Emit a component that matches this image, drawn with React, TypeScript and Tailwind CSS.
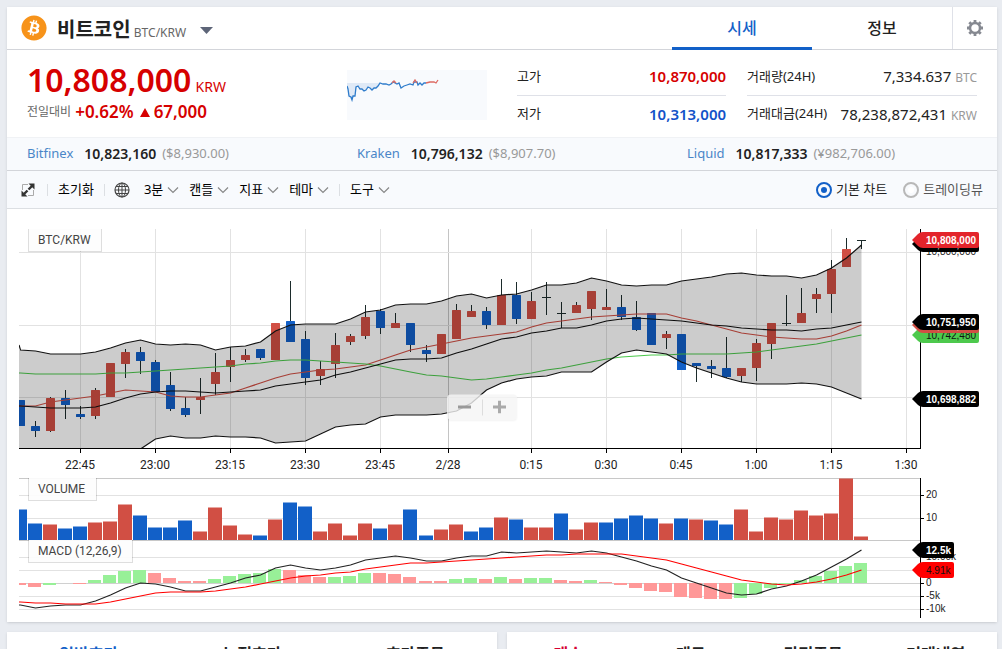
import { useState } from "react";
import { FaBitcoin } from "react-icons/fa6";

const EXCHANGES = [
  { name: "Bitfinex", price: "10,823,160", foreign: "($8,930.00)" },
  { name: "Kraken", price: "10,796,132", foreign: "($8,907.70)" },
  { name: "Liquid", price: "10,817,333", foreign: "(¥982,706.00)" },
];

const MENUS = ["3분", "캔들", "지표", "테마"];

// [high, body top, body bottom, low, up]
const CANDLES: [number, number, number, number, number][] = [
  [400, 400, 426, 426, 0], [421, 426, 431, 437, 0], [397, 398, 431, 432, 1], [390, 398, 405, 419, 0],
  [406, 414, 417, 419, 0], [388, 390, 416, 419, 1], [363, 363, 397, 397, 1], [349, 352, 364, 378, 1],
  [347, 352, 361, 374, 0], [360, 362, 392, 392, 0], [372, 385, 409, 411, 0], [397, 408, 415, 417, 0],
  [378, 397, 400, 414, 1], [353, 372, 384, 395, 1], [347, 360, 367, 382, 1], [349, 355, 360, 362, 1],
  [349, 349, 358, 360, 0], [323, 323, 360, 360, 1], [281, 321, 342, 342, 0], [331, 339, 378, 385, 0],
  [361, 369, 376, 385, 1], [333, 345, 364, 378, 1], [334, 336, 342, 345, 1], [305, 317, 336, 339, 1],
  [309, 311, 328, 334, 0], [313, 323, 328, 328, 1], [323, 323, 345, 352, 0], [345, 350, 354, 362, 0],
  [334, 334, 354, 354, 1], [304, 310, 339, 339, 1], [305, 311, 317, 317, 1], [307, 311, 325, 329, 0],
  [279, 295, 325, 325, 1], [282, 295, 319, 324, 0], [292, 301, 319, 319, 1], [282, 297, 298, 315, 2],
  [302, 313, 314, 328, 2], [302, 305, 313, 313, 1], [291, 291, 309, 320, 1], [289, 307, 310, 310, 1],
  [295, 307, 317, 320, 0], [301, 317, 330, 331, 0], [313, 313, 345, 345, 0], [331, 334, 338, 349, 1],
  [334, 334, 370, 370, 0], [363, 363, 366, 382, 0], [360, 366, 369, 378, 0], [337, 368, 377, 378, 0],
  [368, 368, 376, 382, 1], [339, 343, 368, 381, 1], [323, 323, 344, 359, 1], [295, 323, 324, 326, 2],
  [288, 313, 323, 323, 1], [288, 294, 299, 313, 1], [260, 269, 294, 313, 1], [238, 249, 267, 267, 1],
  [240, 240, 241, 249, 2],
];

const UPPER = [
  350, 351, 354, 354, 354, 352, 348, 343, 340, 344, 345, 344, 345, 350, 347, 346, 342, 331, 325, 324,
  324, 324, 319, 312, 310, 305, 304, 304, 301, 296, 294, 298, 295, 294, 290, 285, 285, 283, 278, 281,
  285, 286, 285, 285, 281, 279, 277, 274, 273, 275, 276, 276, 278, 275, 268, 258, 245,
];
const LOWER = [
  458, 458, 458, 458, 458, 458, 458, 454, 449, 439, 436, 438, 438, 436, 437, 437, 438, 443, 442, 441,
  434, 427, 425, 424, 417, 415, 415, 415, 414, 411, 403, 390, 383, 379, 377, 376, 372, 372, 372, 362,
  353, 350, 352, 354, 362, 368, 373, 378, 382, 384, 384, 384, 383, 384, 387, 393, 399,
];
const MIDDLE = [
  406, 407, 408, 408, 408, 407, 403, 398, 394, 392, 391, 391, 392, 393, 392, 391, 390, 386, 384, 382,
  380, 375, 372, 368, 364, 360, 359, 359, 358, 353, 349, 344, 339, 337, 333, 331, 328, 328, 325, 321,
  319, 318, 319, 320, 321, 323, 325, 326, 328, 329, 330, 330, 331, 329, 328, 325, 322,
];
const SHORT_MA = [
  406, 406, 402, 400, 398, 396, 393, 390, 391, 392, 396, 397, 397, 395, 393, 388, 383, 378, 374, 372,
  370, 369, 367, 365, 360, 355, 350, 347, 344, 341, 338, 336, 334, 332, 327, 323, 321, 319, 317, 316,
  315, 314, 314, 314, 318, 321, 325, 329, 333, 335, 337, 338, 339, 339, 336, 331, 325,
];
const LONG_MA = [
  373, 374, 374, 374, 374, 374, 373, 373, 372, 371, 370, 369, 368, 367, 366, 364, 363, 361, 360, 360,
  361, 362, 363, 364, 366, 369, 372, 375, 376, 378, 380, 379, 377, 375, 373, 370, 368, 365, 362, 359,
  357, 356, 355, 355, 354, 354, 354, 354, 353, 352, 350, 348, 346, 344, 341, 338, 335,
];
const MACD = [
  605, 608, 606, 605, 605, 601, 595, 588, 583, 584, 587, 591, 591, 587, 583, 578, 575, 568, 565, 568,
  570, 568, 565, 560, 558, 556, 558, 561, 561, 558, 556, 556, 552, 553, 552, 551, 552, 553, 551, 553,
  557, 561, 566, 570, 578, 583, 588, 593, 595, 594, 589, 586, 581, 575, 567, 559, 550,
];
const SIGNAL = [
  602, 603, 603, 604, 604, 604, 602, 599, 596, 593, 592, 592, 592, 591, 589, 587, 584, 581, 578, 576,
  575, 573, 572, 569, 567, 565, 563, 563, 562, 561, 560, 559, 558, 557, 556, 555, 555, 554, 554, 554,
  554, 556, 558, 560, 564, 568, 572, 576, 580, 582, 584, 585, 584, 582, 579, 575, 570,
];

// [top, up]
const VOLUME: [number, number][] = [
  [509, 0], [523, 0], [524, 1], [528, 0], [526, 0], [522, 1], [521, 1], [504, 1], [515, 0], [527, 0],
  [527, 0], [520, 0], [531, 1], [507, 1], [525, 1], [534, 1], [535, 0], [519, 1], [502, 0], [506, 0],
  [531, 1], [523, 1], [535, 1], [523, 1], [528, 0], [524, 1], [509, 0], [535, 0], [529, 1], [524, 1],
  [531, 0], [527, 0], [517, 1], [519, 0], [527, 1], [527, 1], [513, 0], [529, 1], [522, 1], [522, 0],
  [518, 0], [515, 0], [518, 0], [523, 1], [518, 0], [519, 1], [520, 0], [524, 0], [509, 1], [531, 1],
  [517, 1], [519, 1], [510, 1], [515, 1], [513, 1], [478, 1], [536, 1],
];

// [edge, rising]
const HISTOGRAM: [number, number][] = [
  [585, 0], [587, 0], [585, 1], [583, 1], [584, 0], [580, 1], [575, 1], [571, 1], [570, 1], [573, 0],
  [578, 0], [581, 0], [581, 0], [579, 1], [576, 1], [574, 1], [573, 1], [569, 1], [570, 0], [575, 0],
  [577, 0], [577, 1], [576, 1], [573, 1], [573, 0], [574, 0], [577, 0], [581, 0], [581, 0], [579, 1],
  [578, 1], [579, 0], [577, 1], [579, 0], [578, 1], [578, 1], [580, 0], [581, 0], [580, 1], [582, 0],
  [585, 0], [588, 0], [591, 0], [592, 0], [597, 0], [598, 0], [599, 0], [599, 0], [598, 1], [594, 1],
  [588, 1], [584, 1], [580, 1], [576, 1], [571, 1], [566, 1], [563, 1],
];

const TIMES: [number, string][] = [
  [80, "22:45"], [155, "23:00"], [230, "23:15"], [305, "23:30"], [380, "23:45"], [448, "2/28"],
  [531, "0:15"], [606, "0:30"], [681, "0:45"], [756, "1:00"], [831, "1:15"], [906, "1:30"],
];

const LEFT = 19;
const AXIS = 920;
const COLORS = ["#1260c8", "#d14f44"];

const xAt = (i: number) => 20.5 + 15 * i + (i > 26 ? 1 : 0);

const points = (ys: number[]) =>
  `${LEFT},${ys[0]} ` + ys.map((y, i) => `${xAt(i)},${y}`).join(" ");

const Tag = ({ y, text, fill, color = "#fff", right = 979, bold = false }: {
  y: number; text: string; fill: string; color?: string; right?: number; bold?: boolean;
}) => (
  <g>
    <path
      d={`M912 ${y}L918 ${y - 6}Q920 ${y - 8} 923 ${y - 8}H${right - 2}Q${right} ${y - 8} ${right} ${y - 6}V${y + 6}Q${right} ${y + 8} ${right - 2} ${y + 8}H923Q920 ${y + 8} 918 ${y + 6}Z`}
      fill={fill}
    />
    <text x={926} y={y + 4} fill={color} fontSize={10} fontWeight={bold ? 700 : 400}>{text}</text>
  </g>
);

const PaneLabel = ({ y, width, text }: { y: number; width: number; text: string }) => (
  <g className="font-[Roboto,sans-serif]">
    <rect x={28} y={y} width={width + 1} height={23} fill="#000" opacity={0.13} />
    <rect x={29} y={y} width={width - 1} height={22} fill="#fff" opacity={0.92} />
    <text x={38} y={y + 15} fontSize={12} fill="#444">{text}</text>
  </g>
);

const Chart = () => (
  <svg viewBox="7 209 990 413" className="block w-full font-['Liberation_Sans',Arial,sans-serif]" role="img" aria-label="BTC/KRW 차트">
    <defs>
      <clipPath id="plot">
        <rect x={LEFT} y={229} width={AXIS - LEFT} height={219} />
      </clipPath>
      <clipPath id="lower">
        <rect x={LEFT} y={478} width={AXIS - LEFT} height={140} />
      </clipPath>
    </defs>

    <g stroke="#e2e2e2">
      {TIMES.map(([x, t]) => (
        <path key={t} d={`M${x + 0.5} 229V448`} stroke={t === "2/28" ? "#c4c4c4" : undefined} />
      ))}
      {[252, 325, 397, 495, 518, 557, 570, 596, 609].map((y) => (
        <path key={y} d={`M${LEFT} ${y + 0.5}H${AXIS}`} />
      ))}
      {[478, 540].map((y) => (
        <path key={y} d={`M${LEFT} ${y + 0.5}H${AXIS}`} stroke="#c8c8c8" />
      ))}
      <path d={`M${LEFT} 583.5H${AXIS}`} stroke="#d0d0d0" />
    </g>

    <g clipPath="url(#plot)">
      {CANDLES.map(([high, top, bottom, low, kind], i) => (
        <g key={i}>
          <path d={`M${xAt(i)} ${high}V${low}`} stroke="#1c2b2b" />
          {kind === 2 ? (
            <path d={`M${xAt(i) - 4.5} ${top + 0.5}h9`} stroke="#1c2b2b" />
          ) : (
            <rect x={xAt(i) - 4.5} y={top} width={9} height={bottom - top} rx={0.5} fill={COLORS[kind]} />
          )}
        </g>
      ))}
      <g fill="none" strokeWidth={1.2}>
        <polyline points={points(SHORT_MA)} stroke="#d14f44" />
        <polyline points={points(LONG_MA)} stroke="#4dc94d" />
        <polyline points={points(MIDDLE)} stroke="#111" />
      </g>
      <polygon
        points={`${points(UPPER)} ${LOWER.map((y, i) => `${xAt(i)},${y}`).reverse().join(" ")} ${LEFT},458`}
        fill="#000"
        opacity={0.2}
      />
      <g fill="none" stroke="#111" strokeWidth={1.2}>
        <polyline points={`${LEFT},345 ${points(UPPER).slice(7)}`} />
        <polyline points={points(LOWER)} />
      </g>
    </g>

    <g clipPath="url(#lower)">
      {VOLUME.map(([top, up], i) => (
        <g key={i} fill={COLORS[up]}>
          <rect x={xAt(i) - 7.5} y={top} width={14} height={1} opacity={0.5} />
          <rect x={xAt(i) - 7.5} y={top + 1} width={14} height={539 - top} />
        </g>
      ))}
      {HISTOGRAM.map(([edge, rising], i) => (
        <rect
          key={i}
          x={xAt(i) - 7.5}
          y={Math.min(edge, 583)}
          width={13}
          height={Math.abs(edge - 583)}
          fill={rising ? "#98f098" : "#ff9898"}
        />
      ))}
      <g fill="none" strokeWidth={1.2}>
        <polyline points={points(MACD)} stroke="#222" />
        <polyline points={points(SIGNAL)} stroke="#f00" />
      </g>
    </g>

    <path
      d={`M${LEFT} 448.5H921M920.5 229V449M920.5 478V618M920 495.5h4M920 518.5h4M920 583.5h4M920 596.5h4M920 609.5h4M${TIMES.map(([x]) => `${x + 0.5} 448v5`).join("M")}`}
      stroke="#000"
      fill="none"
    />
    <g fontSize={12} fill="#222" textAnchor="middle" className="font-[Roboto,sans-serif]">
      {TIMES.map(([x, t]) => (
        <text key={t} x={x} y={469}>{t}</text>
      ))}
    </g>
    <g fontSize={10} fill="#222">
      <text x={926} y={255}>10,800,000</text>
      <text x={926} y={498}>20</text>
      <text x={926} y={521}>10</text>
      <text x={926} y={560}>10.00k</text>
      <text x={926} y={586}>0</text>
      <text x={926} y={599}>-5k</text>
      <text x={926} y={612}>-10k</text>
    </g>

    <Tag y={244} text="10,805,018" fill="#000" />
    <Tag y={240} text="10,808,000" fill="#e3242b" bold />
    <Tag y={335} text="10,742,480" fill="#4dc94d" color="#111" />
    <Tag y={325} text="10,749,600" fill="#d14f44" />
    <Tag y={322} text="10,751,950" fill="#000" bold />
    <Tag y={399} text="10,698,882" fill="#000" bold />
    <Tag y={550} text="12.5k" fill="#000" right={954} bold />
    <Tag y={570} text="4.91k" fill="#f00" color="#111" right={954} />

    <PaneLabel y={229} width={73} text="BTC/KRW" />
    <PaneLabel y={478} width={68} text="VOLUME" />
    <PaneLabel y={540} width={104} text="MACD (12,26,9)" />
  </svg>
);

const Sparkline = () => (
  <svg width="140" height="50" viewBox="0 0 140 50" className="shrink-0 bg-[#f8fafd]" fill="none">
    <path d="M0 13H34L31 17L28 18L25 19L22 17L18 20L14 19L10 15L8 24L5 30L2 27L0 16Z" fill="#dfe9f6" />
    <path
      d="M0 16L1 19L2 26L4 27L5 30L6 26L8 26L9 17L11 16L13 19L15 19L17 21L19 20L21 17L23 18L25 20L27 18L29 18L31 16L33 13L36 14L39 14L42 15L44 14L46 12L48 13L50 14L52 13L54 18L57 16L60 15L63 14L66 15L67 12L70 12L71 15L73 13L75 15L77 13L79 13"
      stroke="#2f7ccb"
      strokeWidth="1.3"
    />
    <path d="M45 13L47 11L49 13M66 13L68 10L70 13M79 13L83 12L87 12L89 13L91 10" stroke="#dd6a62" strokeWidth="1.3" />
  </svg>
);

const Chevron = () => (
  <svg width="12" height="8" viewBox="0 0 12 8" fill="none" stroke="#888" strokeWidth="1.2">
    <path d="M1 1.5L6 6.5L11 1.5" />
  </svg>
);

const Divider = () => <span className="h-3 w-px bg-[#dcdfe3]" />;

const Home = () => {
  const [chart, setChart] = useState("basic");

  return (
    <main className="h-screen overflow-y-auto bg-[#e9ecf1] pt-[7px] pr-[5px] pl-[7px] font-['Noto_Sans','Noto_Sans_CJK_KR',sans-serif] text-[13px] text-[#222]">
      <section className="bg-white shadow-sm">
        <header className="flex h-[43px] items-stretch border-b border-[#d3d5da]">
          <div className="flex flex-1 items-center pl-3.5">
            <FaBitcoin size={26} color="#f7931a" />
            <h1 className="ml-2.5 pt-1 text-xl leading-6 font-bold whitespace-nowrap">
              비트코인 <span className="-ml-0.5 text-xs font-normal text-[#666]">BTC/KRW</span>
            </h1>
            <button aria-label="코인 선택" className="ml-3.5 pt-1">
              <svg width="13" height="7" viewBox="0 0 13 7" fill="#5d6578">
                <path d="M0 0H13L6.5 7Z" />
              </svg>
            </button>
          </div>
          <nav className="flex text-base">
            <button className="-mb-px w-[140px] border-b-3 border-[#1260c8] pt-0.5 font-medium text-[#1260c8]">시세</button>
            <button className="w-[140px] font-medium">정보</button>
          </nav>
          <button aria-label="설정" className="flex w-[45px] items-center justify-center border-l border-[#dfe1e8]">
            <svg width="18" height="18" viewBox="0 0 18 18" fill="none" stroke="#868991">
              <circle cx="9" cy="9" r="5" strokeWidth="2.5" />
              <path
                d="M9 1V4M9 14V17M1 9H4M14 9H17M3.3 3.3L5.3 5.3M12.7 12.7L14.7 14.7M14.7 3.3L12.7 5.3M5.3 12.7L3.3 14.7"
                strokeWidth="2.8"
              />
            </svg>
          </button>
        </header>

        <div className="flex h-[87px] items-start px-5 pt-5">
          <div className="w-[320px] shrink-0 text-[#d60000]">
            <p className="-mt-2 text-[32px] leading-9 font-semibold">
              10,808,000 <span className="-ml-1 text-sm font-normal">KRW</span>
            </p>
            <p className="flex items-center text-[17px] leading-7 font-semibold">
              <span className="mr-1 text-xs font-normal text-[#666]">전일대비</span>
              +0.62%
              <svg width="10" height="9" viewBox="0 0 10 9" fill="#d60000" className="mr-1 ml-1.5">
                <path d="M5 0L10 9H0Z" />
              </svg>
              67,000
            </p>
          </div>
          <Sparkline />
          <dl className="-mt-3 ml-[30px] min-w-0 flex-[10]">
            <div className="flex h-[38px] items-center justify-between border-b border-[#dfe1e8]">
              <dt>고가</dt>
              <dd className="text-[15px] font-semibold text-[#d60000]">10,870,000</dd>
            </div>
            <div className="flex h-9 items-center justify-between">
              <dt>저가</dt>
              <dd className="text-[15px] font-semibold text-[#1252c8]">10,313,000</dd>
            </div>
          </dl>
          <dl className="-mt-3 ml-[21px] min-w-0 flex-[11] whitespace-nowrap">
            <div className="flex h-[38px] items-center justify-between border-b border-[#dfe1e8]">
              <dt>거래량(24H)</dt>
              <dd className="text-[15px]">
                7,334.637 <span className="text-xs text-[#999]">BTC</span>
              </dd>
            </div>
            <div className="flex h-9 items-center justify-between">
              <dt>거래대금(24H)</dt>
              <dd className="text-[15px]">
                78,238,872,431 <span className="text-xs text-[#999]">KRW</span>
              </dd>
            </div>
          </dl>
        </div>

        <ul className="grid h-[34px] grid-cols-3 border-t border-b border-t-[#f0f2f5] border-b-[#d3d5da] bg-[#f8fafd]">
          {EXCHANGES.map(({ name, price, foreign }) => (
            <li key={name} className="flex items-center pl-5">
              <a href="#" className="text-[#4a86c8]">{name}</a>
              <b className="ml-[11px] text-sm font-semibold">{price}</b>
              <span className="ml-1.5 text-[#999]">{foreign}</span>
            </li>
          ))}
        </ul>

        <div className="flex h-[38px] items-center border-b border-[#dcdfe3] bg-[#f8fafd] px-3.5 whitespace-nowrap text-black">
          <button aria-label="전체 화면" className="mr-3">
            <svg width="14" height="14" viewBox="0 0 14 14" fill="none" stroke="#333">
              <path d="M1.5 7V1.5H7M12.5 7V12.5H7" stroke="#aaa" />
              <path d="M3 11L6.5 7.5M7.5 6.5L11 3" strokeWidth="2.4" />
              <path d="M7.5 0.5H13.5V6.5ZM0.5 7.5V13.5H6.5Z" fill="#333" stroke="none" />
            </svg>
          </button>
          <Divider />
          <button className="mx-2.5">초기화</button>
          <Divider />
          <button aria-label="시간대" className="mr-3.5 ml-[9px]">
            <svg width="16" height="16" viewBox="0 0 16 16" fill="none" stroke="#444">
              <circle cx="8" cy="8" r="7" strokeWidth="1.2" />
              <ellipse cx="8" cy="8" rx="3.5" ry="7" />
              <path d="M8 1V15M1 8H15M2 4.5H14M2 11.5H14" />
            </svg>
          </button>
          {MENUS.map((label) => (
            <button key={label} className="mr-2.5 flex items-center gap-1">
              {label}
              <Chevron />
            </button>
          ))}
          <Divider />
          <button className="ml-2.5 flex items-center gap-1">
            도구
            <Chevron />
          </button>
          <div className="ml-auto flex gap-4">
            {[["basic", "기본 차트"], ["tradingview", "트레이딩뷰"]].map(([value, label]) => (
              <label key={value} className="flex items-center gap-1 text-[#555] has-checked:text-[#222]">
                <input
                  type="radio"
                  name="chart"
                  checked={chart === value}
                  onChange={() => setChart(value)}
                  className="h-4 w-4 appearance-none rounded-full border-2 border-[#b8b8b8] bg-white bg-clip-content p-[3px] checked:border-[#1260c8] checked:bg-[#1260c8]"
                />
                {label}
              </label>
            ))}
          </div>
        </div>

        <div className="relative">
          <Chart />
          <div className="absolute top-[48%] left-[48%] flex h-[25px] w-[70px] -translate-x-1/2 -translate-y-1/2 items-center divide-x divide-[#ddd] rounded-sm bg-[#f5f5f5]/80 shadow-xs">
            <button aria-label="축소" className="flex h-4 flex-1 items-center justify-center">
              <span className="h-[3px] w-[13px] bg-[#999]" />
            </button>
            <button aria-label="확대" className="flex h-4 flex-1 items-center justify-center">
              <svg width="13" height="13" stroke="#aaa" strokeWidth="3">
                <path d="M6.5 0V13M0 6.5H13" />
              </svg>
            </button>
          </div>
        </div>
      </section>

      <div className="mt-2.5 grid grid-cols-2 gap-2.5 text-base font-bold">
        <section className="grid h-11 grid-cols-3 bg-white shadow-sm">
          <button className="text-[#1260c8]">일반호가</button>
          <button>누적호가</button>
          <button>호가주문</button>
        </section>
        <section className="grid h-11 grid-cols-4 bg-white shadow-sm">
          <button className="text-[#d60032]">매수</button>
          <button>매도</button>
          <button>간편주문</button>
          <button>거래내역</button>
        </section>
      </div>
    </main>
  );
};

export default Home;
